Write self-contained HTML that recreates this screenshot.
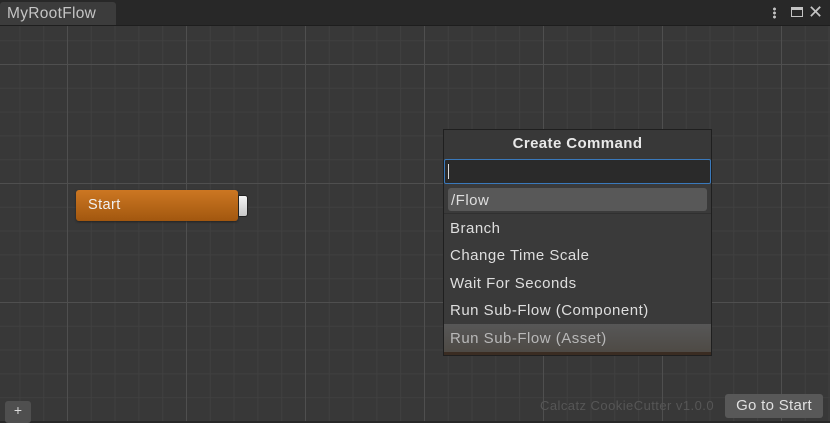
<!DOCTYPE html><html><head><style>
body{margin:0;width:830px;height:421px;overflow:hidden;background:#282828;font-family:"Liberation Sans",sans-serif;position:relative}
.c{position:absolute;left:0;top:25px;width:830px;height:396px;background-color:#383838;
background-image:linear-gradient(90deg,#4f4f4f 1px,transparent 1px),linear-gradient(0deg,#4f4f4f 1px,transparent 1px),linear-gradient(90deg,#404040 1px,transparent 1px),linear-gradient(0deg,#404040 1px,transparent 1px);
background-size:119px 119px,119px 119px,23.8px 23.8px,23.8px 23.8px;
background-position:67px 39px,67px 39px,67px 39px,67px 39px;border-top:1px solid #1e1e1e;box-sizing:border-box}
.tab{position:absolute;left:0;top:2px;width:116px;height:24px;background:#3c3c3c;border-radius:3px 3px 0 0;color:#c4c4c4;font-size:15.5px;letter-spacing:0.3px;line-height:24px;padding-left:7px;box-sizing:border-box}
.a{position:absolute}
.i{position:absolute;left:450px;color:#dedede;font-size:15px;letter-spacing:0.5px;line-height:20px}
</style></head><body>
<div class="tab">MyRootFlow</div>
<div class="a" style="left:773px;top:7px;width:3px;height:12px;background:radial-gradient(circle,#c4c4c4 1.3px,transparent 1.6px) 0 0/3px 4px"></div>
<div class="a" style="left:791px;top:7px;width:12px;height:10px;border:1px solid #c4c4c4;border-top-width:3px;box-sizing:border-box"></div>
<div class="a" style="left:808px;top:2px;color:#c4c4c4;font-size:18px">✕</div>
<div class="c"></div>
<div class="a" style="left:76px;top:190px;width:162px;height:31px;border-radius:3px;background:linear-gradient(#cc7722,#a2570f);box-shadow:0 1px 2px #222;color:#f0f0f0;font-size:14.5px;letter-spacing:0.4px;line-height:29px;padding-left:12px;padding-top:1px;box-sizing:border-box">Start</div>
<div class="a" style="left:238px;top:195px;width:10px;height:22px;border-radius:0 3px 3px 0;background:linear-gradient(#f4f4f4,#c8c8c8);border:1px solid #222;box-sizing:border-box"></div>
<div class="a" style="left:443px;top:129px;width:269px;height:227px;background:#383838;border:1px solid #1f1f1f;box-sizing:border-box"></div>
<div class="a" style="left:443px;top:135px;width:269px;text-align:center;color:#e8e8e8;font-weight:bold;font-size:15px;letter-spacing:0.4px">Create Command</div>
<div class="a" style="left:444px;top:159px;width:267px;height:25px;background:#2a2a2a;border:1px solid #3a79bb;border-radius:2px;box-sizing:border-box"></div>
<div class="a" style="left:448px;top:164px;width:1px;height:15px;background:#ddd"></div>
<div class="a" style="left:444px;top:184px;width:267px;height:140px;background:#3a3a3a"></div>
<div class="a" style="left:448px;top:188px;width:259px;height:23px;background:#585858;border-radius:3px"></div>
<div class="a" style="left:444px;top:213px;width:267px;height:1px;background:#303030"></div>
<div class="a" style="left:444px;top:324px;width:267px;height:28px;background:linear-gradient(#575757,#4e4a45)"></div>
<div class="a" style="left:444px;top:352px;width:267px;height:3px;background:#3a2c22"></div>
<div class="i" style="left:451px;top:191px">/Flow</div>
<div class="i" style="top:219px">Branch</div>
<div class="i" style="top:246px">Change Time Scale</div>
<div class="i" style="top:274px">Wait For Seconds</div>
<div class="i" style="top:301px">Run Sub-Flow (Component)</div>
<div class="i" style="top:329px;color:#b8b8b8">Run Sub-Flow (Asset)</div>
<div class="a" style="left:540px;top:398px;color:#565656;font-size:13px;letter-spacing:0.45px">Calcatz CookieCutter v1.0.0</div>
<div class="a" style="left:725px;top:394px;width:98px;height:24px;background:#585858;border-radius:3px;color:#e0e0e0;font-size:15px;letter-spacing:0.3px;line-height:24px;text-align:center">Go to Start</div>
<div class="a" style="left:5px;top:401px;width:26px;height:22px;background:#4f4f4f;border-radius:3px;color:#ddd;font-size:14px;line-height:18px;text-align:center">+</div>
</body></html>
